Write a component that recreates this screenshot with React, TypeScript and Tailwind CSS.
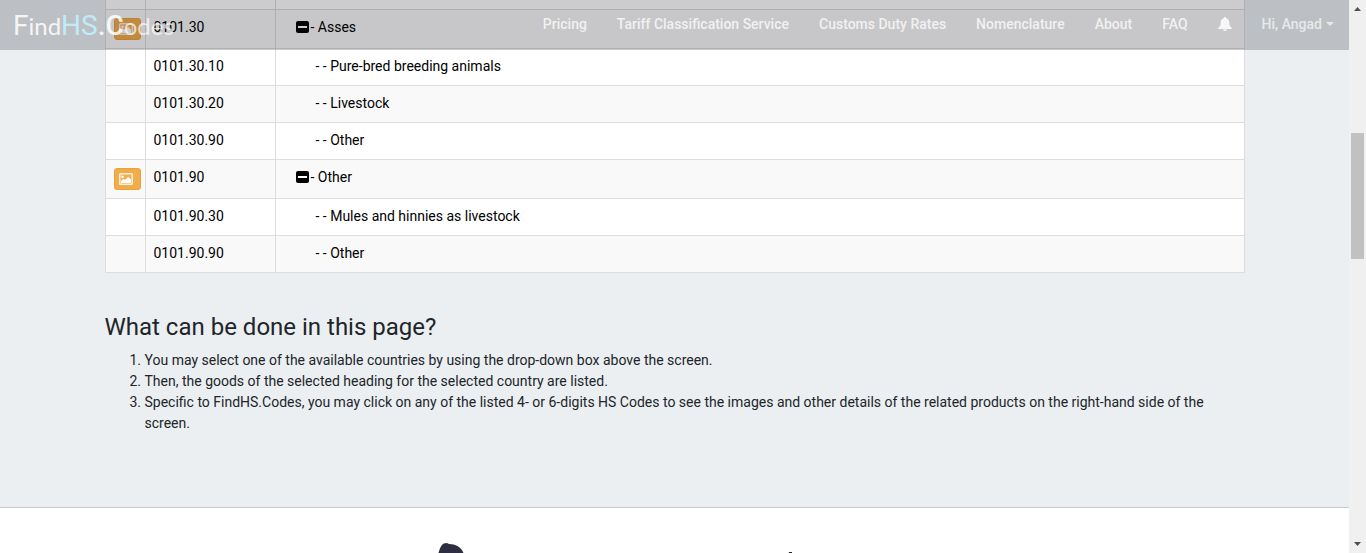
import React from "react";

type Row = { code: string; text: string; group?: boolean };

const rows: Row[] = [
  { code: "0101.30", text: "- Asses", group: true },
  { code: "0101.30.10", text: "- - Pure-bred breeding animals" },
  { code: "0101.30.20", text: "- - Livestock" },
  { code: "0101.30.90", text: "- - Other" },
  { code: "0101.90", text: "- Other", group: true },
  { code: "0101.90.30", text: "- - Mules and hinnies as livestock" },
  { code: "0101.90.90", text: "- - Other" },
];

const links = [
  "Pricing",
  "Tariff Classification Service",
  "Customs Duty Rates",
  "Nomenclature",
  "About",
  "FAQ",
];

function PictureIcon() {
  return (
    <svg viewBox="0 0 14 12" className="h-3 w-3.5" aria-hidden="true">
      <rect x="0.75" y="0.75" width="12.5" height="10.500" rx="0.8" fill="none" stroke="#fdf0dc" strokeWidth="1.500" />
      <circle cx="3.600" cy="3.700" r="1.300" fill="#fff" />
      <path fill="#fff" d="M2 10V8l2.400-2.200L6 7l3.200-3.200L12 6.500V10z" />
    </svg>
  );
}

function MinusSquare() {
  return (
    <svg viewBox="0 0 13 12" className="h-3 w-[13px]" aria-hidden="true">
      <rect width="13" height="12" rx="2" fill="#000" />
      <rect x="2" y="5" width="9" height="2" fill="#fff" />
    </svg>
  );
}

function Bell() {
  return (
    <svg viewBox="0 0 14 14" className="h-3.5 w-3.5" fill="currentColor" aria-hidden="true">
      <path d="M7 0c.7 0 1.200.500 1.200 1.200C10.300 1.700 11.300 3.300 11.300 5.200c0 3 .7 4.300 2.200 5.400.4.300.5.500.5.800 0 .3-.3.500-.7.500H.7c-.4 0-.7-.2-.7-.5 0-.3.1-.5.5-.8 1.500-1.100 2.200-2.400 2.200-5.400 0-1.900 1-3.500 3.100-4C5.800.5 6.300 0 7 0zM5 12.400h4C8.900 13.400 8.100 14 7 14s-1.900-.6-2-1.600z" />
    </svg>
  );
}

function Header() {
  return (
    <header className="absolute inset-x-0 top-0 flex h-[50px] items-center justify-between bg-[#00000a]/20">
      <a
        href="#home"
        className="flex items-baseline pl-[13px] pt-0.5 text-[28px] leading-[50px] text-white/85"
      >
        <span>F</span>
        <span className="font-[Lato,sans-serif] text-2xl">ind</span>
        <span className="text-[#c0ecfa]">HS</span>
        <span className="font-medium">.C</span>
        <span className="font-[Lato,sans-serif] text-2xl text-white/70">odes</span>
      </a>
      <nav className="flex items-center pb-0.5 text-sm font-medium text-white/75">
        {links.map((label) => (
          <a key={label} href="#nav" className="px-[15px] leading-5">
            {label}
          </a>
        ))}
        <a href="#alerts" aria-label="Notifications" className="px-[15px] text-white/85">
          <Bell />
        </a>
        <button type="button" className="flex items-center gap-1 px-[15px] leading-5 text-white/65">
          Hi, Angad
          <svg viewBox="0 0 8 4" className="h-1 w-2" fill="currentColor" aria-hidden="true">
            <path d="M0 0h8L4 4z" />
          </svg>
        </button>
      </nav>
    </header>
  );
}

function CodesTable() {
  return (
    <table className="w-full table-fixed border-collapse bg-white text-sm leading-5 text-black">
      <colgroup>
        <col className="w-10" />
        <col className="w-[130px]" />
        <col />
      </colgroup>
      <tbody>
        <tr className="h-[9px]">
          <td className="border border-t-0 border-[#ddd] p-0" />
          <td className="border border-t-0 border-[#ddd] p-0" />
          <td className="border border-t-0 border-[#ddd] p-0" />
        </tr>
        {rows.map((row) => (
          <tr key={row.code} className="align-top odd:bg-white even:bg-[#f9f9f9]">
            <td className="border border-[#ddd] px-2 py-0">
              {row.group && (
                <button
                  type="button"
                  aria-label={`Images of ${row.code}`}
                  className="my-2 flex h-[22px] w-[27px] items-center justify-center rounded-[3px] border border-[#eea236] bg-[#f0ad4e] pr-0.5 text-white"
                >
                  <PictureIcon />
                </button>
              )}
            </td>
            <td className="border border-[#ddd] px-2 pt-[7px] pb-[9px]">{row.code}</td>
            <td className="border border-[#ddd] px-2 pt-[7px] pb-[9px]">
              {row.group ? (
                <div className="flex items-center gap-0.5 pl-3">
                  <MinusSquare />
                  {row.text}
                </div>
              ) : (
                <div className="pl-8">{row.text}</div>
              )}
            </td>
          </tr>
        ))}
      </tbody>
    </table>
  );
}

function Scrollbar() {
  return (
    <div className="flex w-[17px] shrink-0 flex-col items-center bg-[#f0f0f0] py-[7px]" aria-hidden="true">
      <svg viewBox="0 0 7 4" className="h-1 w-[7px]" fill="#505050">
        <path d="M0 4h7L3.500 0z" />
      </svg>
      <div className="flex w-full flex-1 flex-col items-center">
        <div className="grow-[122]" />
        <div className="w-[13px] grow-[126] bg-[#c1c1c1]" />
        <div className="grow-[283]" />
      </div>
      <svg viewBox="0 0 7 4" className="h-1 w-[7px]" fill="#505050">
        <path d="M0 0h7L3.500 4z" />
      </svg>
    </div>
  );
}

export default function App() {
  return (
    <div className="flex h-screen overflow-hidden font-[Roboto,sans-serif] text-[#212529]">
      <div className="relative min-w-0 flex-1 overflow-hidden bg-white">
        <main className="border-b border-[#c8c8c8] bg-[#ebeff2] pb-[73px]">
          <div className="mx-auto max-w-[1140px]">
            <CodesTable />
            <h2 className="mt-10 text-2xl leading-7">What can be done in this page?</h2>
            <ol className="mt-[9px] list-decimal pl-10 text-sm leading-[21px]">
              <li>You may select one of the available countries by using the drop-down box above the screen.</li>
              <li>Then, the goods of the selected heading for the selected country are listed.</li>
              <li>
                Specific to FindHS.Codes, you may click on any of the listed 4- or 6-digits HS Codes to see the images
                and other details of the related products on the right-hand side of the screen.
              </li>
            </ol>
          </div>
        </main>
        <footer className="mx-auto flex max-w-[1140px] pt-[35px]">
          <svg viewBox="0 0 360 20" className="ml-[333px] h-5 w-[360px]" aria-hidden="true">
            <path
              d="M0 12C1 7 3 3 4 2Q5 0 9 0l2 1q6 0 10 3 4 3 5 8z"
              fill="#2f2e41"
            />
            <path d="M351 9h3v3h-4z" fill="#212529" />
          </svg>
        </footer>
        <Header />
      </div>
      <Scrollbar />
    </div>
  );
}
